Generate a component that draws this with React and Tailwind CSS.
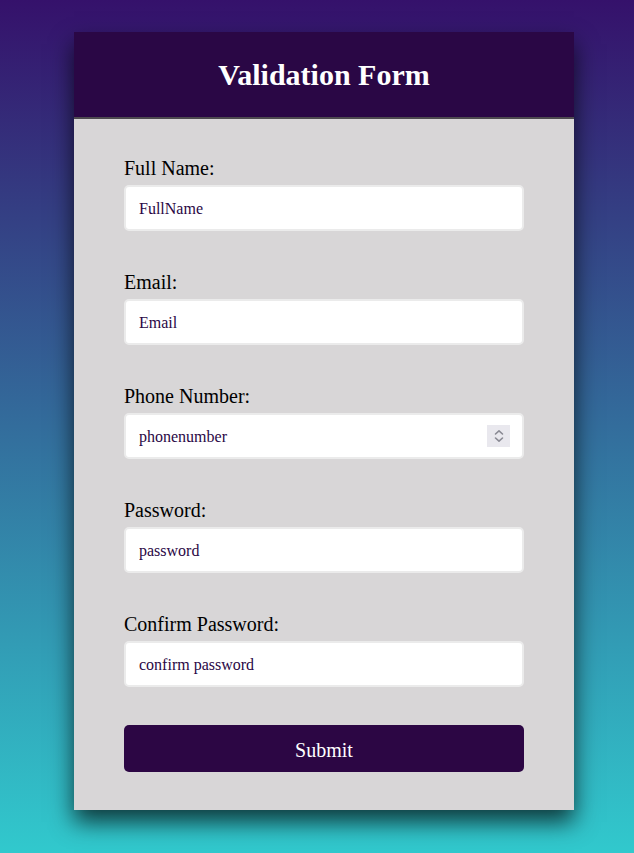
import { useState } from "react";

const fields = [
  { id: "fullname", label: "Full Name:", type: "text", placeholder: "FullName" },
  { id: "email", label: "Email:", type: "email", placeholder: "Email" },
  { id: "phone", label: "Phone Number:", type: "text", placeholder: "phonenumber", spinner: true },
  { id: "password", label: "Password:", type: "password", placeholder: "password" },
  { id: "confirm", label: "Confirm Password:", type: "password", placeholder: "confirm password" },
];

function Spinner() {
  return (
    <span className="absolute right-[14px] top-1/2 -translate-y-1/2 w-[23px] h-[22px] bg-[#e9e8ee] flex items-center justify-center pointer-events-none">
      <svg width="10" height="14" viewBox="0 0 10 14" fill="none" stroke="#8a8a94" strokeWidth="1.6" strokeLinecap="round" strokeLinejoin="round">
        <path d="M1.5 5 L5 1.8 L8.5 5" />
        <path d="M1.5 9 L5 12.2 L8.5 9" />
      </svg>
    </span>
  );
}

export default function App() {
  const [values, setValues] = useState({});

  const handleChange = (id) => (e) => {
    setValues((prev) => ({ ...prev, [id]: e.target.value }));
  };

  return (
    <div
      className="min-h-screen w-full bg-[linear-gradient(to_bottom,#35116b,#31c9cd)] pt-[32px] pb-[43px] pl-[14px]"
      style={{ fontFamily: '"Liberation Serif", "Times New Roman", serif' }}
    >
      <div className="mx-auto w-[500px] bg-[#d8d6d7] shadow-[0_12px_22px_rgba(0,0,0,0.7)]">
        <div className="h-[87px] bg-[#2a0745] border-b-2 border-[#4d4a4f] flex items-center justify-center">
          <h1 className="text-[30px] font-bold text-white leading-none pt-[1px]">Validation Form</h1>
        </div>

        <form
          className="px-[50px] pt-[38px] pb-[38px] flex flex-col"
          onSubmit={(e) => e.preventDefault()}
        >
          <div className="flex flex-col gap-[40px]">
            {fields.map((f) => (
              <div key={f.id} className="flex flex-col">
                <label htmlFor={f.id} className="text-[20px] leading-[22px] text-black">
                  {f.label}
                </label>
                <div className="relative mt-[6px]">
                  <input
                    id={f.id}
                    type={f.type}
                    placeholder={f.placeholder}
                    value={values[f.id] || ""}
                    onChange={handleChange(f.id)}
                    className="w-full h-[46px] bg-white border-2 border-[#ebebeb] rounded-[5px] px-[13px] pt-[2px] text-[16px] text-[#2a0745] placeholder:text-[#2a0745] outline-none"
                    style={{ fontFamily: '"Liberation Serif", "Times New Roman", serif' }}
                  />
                  {f.spinner && <Spinner />}
                </div>
              </div>
            ))}
          </div>

          <button
            type="submit"
            className="mt-[38px] h-[47px] w-full rounded-[5px] bg-[#2c0644] text-white text-[20px] pt-[2px]"
            style={{ fontFamily: '"Liberation Serif", "Times New Roman", serif' }}
          >
            Submit
          </button>
        </form>
      </div>
    </div>
  );
}
